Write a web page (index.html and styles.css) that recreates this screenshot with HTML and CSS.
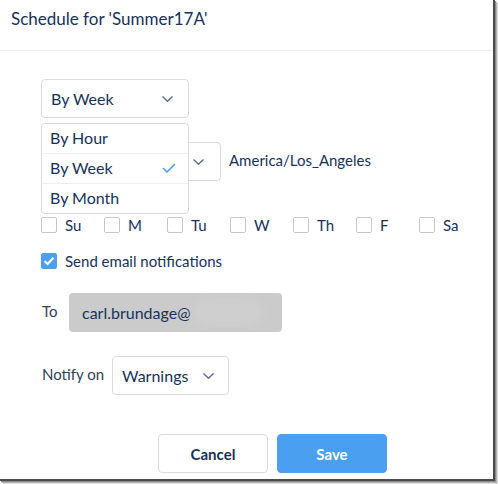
FILE: index.html
```html
<!DOCTYPE html>
<html>
<head>
<meta charset="utf-8">
<link rel="stylesheet" href="styles.css">
</head>
<body>
<div class="frame">
  <div class="header">Schedule for 'Summer17A'</div>
  <div class="content">
    <div class="picker">
      <div class="select sel-freq"><span>By Week</span>
        <svg class="chev" width="11" height="6" viewBox="0 0 11 6"><path d="M0.5 0.5 L5.5 5.2 L10.5 0.5" fill="none" stroke="#54698d" stroke-width="1.4"/></svg>
      </div>
      <div class="menu">
        <div class="item">By Hour</div>
        <div class="item">By Week
          <svg class="tick" width="14" height="10" viewBox="0 0 14 10"><path d="M1 5 L5 9 L13 1" fill="none" stroke="#4a9ff0" stroke-width="1.6"/></svg>
        </div>
        <div class="item">By Month</div>
      </div>
    </div>
    <div class="tz-row">
      <div class="select sel-time">
        <svg class="chev" width="11" height="6" viewBox="0 0 11 6"><path d="M0.5 0.5 L5.5 5.2 L10.5 0.5" fill="none" stroke="#54698d" stroke-width="1.4"/></svg>
      </div>
      <span class="tz">America/Los_Angeles</span>
    </div>
    <div class="days">
      <label class="day"><span class="box"></span>Su</label>
      <label class="day"><span class="box"></span>M</label>
      <label class="day"><span class="box"></span>Tu</label>
      <label class="day"><span class="box"></span>W</label>
      <label class="day"><span class="box"></span>Th</label>
      <label class="day"><span class="box"></span>F</label>
      <label class="day"><span class="box"></span>Sa</label>
    </div>
    <label class="notify"><span class="box checked"><svg width="12" height="10" viewBox="0 0 12 10"><path d="M1.5 5 L4.6 8 L10.5 1.8" fill="none" stroke="#fff" stroke-width="2"/></svg></span>Send email notifications</label>
    <div class="to-row">
      <span class="lbl lbl-to">To</span>
      <div class="email">carl.brundage@<span class="blur"></span></div>
    </div>
    <div class="on-row">
      <span class="lbl lbl-on">Notify on</span>
      <div class="select sel-warn"><span>Warnings</span>
        <svg class="chev" width="11" height="6" viewBox="0 0 11 6"><path d="M0.5 0.5 L5.5 5.2 L10.5 0.5" fill="none" stroke="#54698d" stroke-width="1.4"/></svg>
      </div>
    </div>
  </div>
  <div class="footer">
    <button class="btn cancel">Cancel</button>
    <button class="btn save">Save</button>
  </div>
</div>
</body>
</html>
```
FILE: styles.css
```css
* { box-sizing: border-box; }
html, body { margin: 0; padding: 0; background: #ffffff; }
body {
  font-family: Lato, "Open Sans", sans-serif;
  color: #16325c;
  width: 498px;
  height: 484px;
  overflow: hidden;
}
.frame {
  width: 495px;
  height: 481px;
  border-right: 2px solid #4b4b4b;
  border-bottom: 2px solid #4b4b4b;
  box-shadow: 1px 1px 0 #8a8a8a, 2px 2px 0 #b5b5b5, 3px 3px 0 #dcdcdc;
  display: flex;
  flex-direction: column;
  background: #fff;
}
.header {
  height: 51px;
  padding: 9px 0 0 11px;
  font-size: 17px;
  line-height: 20px;
  color: #16325c;
  border-bottom: 1px solid #eeeeee;
}
.content {
  padding: 28px 0 0 41px;
  display: flex;
  flex-direction: column;
}
.picker { position: relative; }
.select {
  height: 39px;
  border: 1px solid #dddbda;
  border-radius: 4px;
  display: flex;
  align-items: center;
  justify-content: space-between;
  padding: 0 15px 0 9px;
  font-size: 16px;
  background: #fff;
}
.sel-freq { width: 148px; }
.menu {
  position: absolute;
  left: 0;
  top: 44px;
  width: 148px;
  border: 1px solid #dddbda;
  border-radius: 4px;
  background: #fff;
  z-index: 2;
  font-size: 16px;
}
.item {
  height: 30px;
  padding: 0 12px 2px 8px;
  display: flex;
  align-items: center;
  justify-content: space-between;
  border-top: 1px solid #eeeeee;
}
.item:first-child { border-top: none; height: 29px; }
.tz-row {
  margin-top: 24px;
  display: flex;
  align-items: center;
  gap: 8px;
}
.sel-time { width: 180px; justify-content: flex-end; padding-right: 16px; }
.tz { font-size: 15px; margin-top: -4px; }
.days {
  margin-top: 35px;
  display: flex;
  font-size: 15px;
}
.day {
  width: 63px;
  display: flex;
  align-items: center;
  gap: 8px;
  height: 17px;
}
.box {
  width: 16px;
  height: 16px;
  border: 1px solid #c9c7c5;
  border-radius: 2px;
  flex: none;
  display: flex;
  align-items: center;
  justify-content: center;
}
.box.checked { background: #4a9ff0; border-color: #4a9ff0; }
.notify {
  margin-top: 19px;
  display: flex;
  align-items: center;
  gap: 8px;
  height: 18px;
  font-size: 15px;
}
.to-row {
  margin-top: 23px;
  display: flex;
  align-items: center;
}
.lbl { font-size: 15px; color: #2f3f55; }
.lbl-to { width: 27px; margin-left: 1px; margin-top: -4px; }
.email {
  width: 213px;
  height: 39px;
  background: #cbcbcb;
  border-radius: 4px;
  font-size: 16px;
  padding-left: 13px;
  display: flex;
  align-items: center;
  position: relative;
}
.blur {
  display: inline-block;
  width: 70px;
  height: 24px;
  margin-left: 2px;
  background: #cfcfcf;
  border-radius: 12px;
  filter: blur(4px);
}
.on-row {
  margin-top: 24px;
  display: flex;
  align-items: center;
}
.lbl-on { width: 70px; margin-left: 1px; margin-top: -4px; }
.sel-warn { width: 117px; padding-right: 14px; }
.footer {
  margin-top: auto;
  padding: 0 0 6px 158px;
  display: flex;
  gap: 9px;
}
.btn {
  width: 110px;
  height: 39px;
  border-radius: 4px;
  font-family: Lato, sans-serif;
  font-size: 15px;
  font-weight: 700;
  border: 1px solid #dddbda;
}
.cancel { background: #fff; color: #16325c; }
.save { background: #4a9ff0; border-color: #4a9ff0; color: #fff; }
```
